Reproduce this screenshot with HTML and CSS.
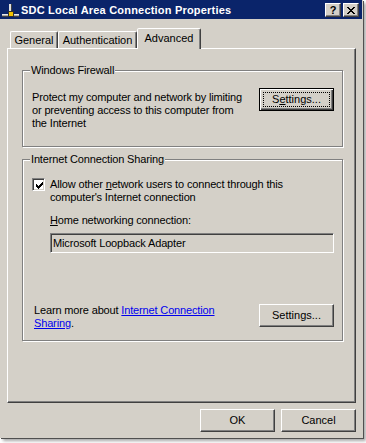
FILE: index.html
```html
<!DOCTYPE html>
<html>
<head>
<meta charset="utf-8">
<title>SDC Local Area Connection Properties</title>
<link rel="stylesheet" href="styles.css">
</head>
<body>
<div class="window">
  <div class="titlebar">
    <svg class="appicon" width="17" height="14" viewBox="0 0 17 14">
      <rect x="0" y="10" width="17" height="3" fill="#a8a8a8"/>
      <rect x="0" y="10" width="17" height="1" fill="#e8e8e8"/>
      <rect x="0" y="12" width="17" height="1" fill="#404040"/>
      <rect x="7" y="0" width="3" height="9" fill="#404040"/>
      <rect x="7" y="0" width="2" height="9" fill="#e0e0e0"/>
      <rect x="6.5" y="7.5" width="5" height="5" fill="#f2c200" stroke="#303030" stroke-width="1"/>
    </svg>
    <span class="title">SDC Local Area Connection Properties</span>
    <div class="tbtns">
      <span class="tbtn">?</span>
      <span class="tbtn">
        <svg width="8" height="7" viewBox="0 0 8 7"><path d="M0 0h2v1h-2z M6 0h2v1h-2z M1 1h2v1h-2z M5 1h2v1h-2z M2 2h4v1h-4z M3 3h2v1h-2z M2 4h4v1h-4z M1 5h2v1h-2z M5 5h2v1h-2z M0 6h2v1h-2z M6 6h2v1h-2z" fill="#000"/></svg>
      </span>
    </div>
  </div>

  <div class="tabs">
    <div class="tab tab-general">General</div>
    <div class="tab tab-auth">Authentication</div>
    <div class="tab tab-adv active">Advanced</div>
  </div>

  <div class="panel">
    <fieldset class="group g1">
      <legend>Windows Firewall</legend>
      <div class="row">
        <p class="desc">Protect my computer and network by limiting or preventing access to this computer from the Internet</p>
        <button class="btn default">S<u>e</u>ttings...</button>
      </div>
    </fieldset>

    <fieldset class="group g2">
      <legend>Internet Connection Sharing</legend>
      <div class="check">
        <span class="cb"><svg width="7" height="7" viewBox="0 0 7 7"><path d="M0 2h1v1h1v1h1v-1h1v-1h1v-1h1v-1h1v3h-1v1h-1v1h-1v1h-1v1h-1v-1h-1v-1h-1z" fill="#000"/></svg></span>
        <span class="check-text">Allow other <u>n</u>etwork users to connect through this computer's Internet connection</span>
      </div>
      <div class="field">
        <div class="flabel"><u>H</u>ome networking connection:</div>
        <div class="input">Microsoft Loopback Adapter</div>
      </div>
      <div class="row learn">
        <p class="learn-text">Learn more about <a class="link">Internet Connection Sharing</a>.</p>
        <button class="btn">Settings...</button>
      </div>
    </fieldset>
  </div>

  <div class="footer">
    <button class="btn">OK</button>
    <button class="btn">Cancel</button>
  </div>
</div>
</body>
</html>
```

FILE: styles.css
```css
* { box-sizing: border-box; }
html, body { margin: 0; padding: 0; }
body {
  width: 366px;
  height: 443px;
  overflow: hidden;
  background: #ffffff;
  font-family: "Liberation Sans", Arial, sans-serif;
  font-size: 11px;
  line-height: 13px;
  letter-spacing: -0.15px;
  color: #000;
}
.window {
  width: 363px;
  height: 438px;
  background: #d4d0c8;
  display: flex;
  flex-direction: column;
  box-shadow: 1px 1px 0 #505050, 3px 3px 3px rgba(0,0,0,.35);
}
.titlebar {
  height: 19px;
  margin-right: 1px;
  background: #0a246a;
  color: #fff;
  display: flex;
  align-items: flex-start;
  padding: 0 3px 0 2px;
}
.appicon { flex: none; margin-top: 4px; }
.title {
  flex: 1;
  margin: 4px 0 0 2px;
  font-weight: bold;
  letter-spacing: .2px;
  white-space: nowrap;
}
.tbtns { display: flex; gap: 2px; margin-top: 3px; }
.tbtn {
  width: 16px;
  height: 14px;
  background: #d4d0c8;
  color: #000;
  border: 1px solid;
  border-color: #fff #404040 #404040 #fff;
  box-shadow: inset -1px -1px 0 #808080;
  display: flex;
  align-items: center;
  justify-content: center;
  font-weight: bold;
  font-size: 11px;
  line-height: 1;
  letter-spacing: 0;
}
.tabs {
  height: 29px;
  display: flex;
  align-items: flex-end;
  padding-left: 10px;
}
.tab {
  height: 17px;
  border: 1px solid;
  border-bottom: 0;
  border-color: #fff #404040 transparent #fff;
  border-radius: 2px 2px 0 0;
  box-shadow: inset -1px 0 0 #808080;
  display: flex;
  align-items: center;
  justify-content: center;
  white-space: nowrap;
  letter-spacing: 0;
}
.tab-general { width: 48px; }
.tab-auth { width: 79px; }
.tab-adv { width: 64px; }
.tab.active {
  height: 21px;
  margin-bottom: -1px;
  position: relative;
  z-index: 1;
  background: #d4d0c8;
  padding-bottom: 2px;
}
.panel {
  margin: 0 7px;
  height: 355px;
  border: 1px solid;
  border-color: #fff #404040 #404040 #fff;
  box-shadow: inset -1px -1px 0 #808080;
  padding: 15px 12px 0 14px;
}
.group {
  margin: 0;
  min-width: 0;
  border: 1px solid #808080;
  box-shadow: 1px 1px 0 #fff, inset 1px 1px 0 #fff;
  padding: 0 8px 0 9px;
}
.group legend {
  padding: 0 1px;
  margin-left: -2px;
  background: #d4d0c8;
  line-height: 13px;
}
.g1 { padding-top: 11px; padding-bottom: 16px; }
.g2 { margin-top: 6px; padding-top: 12px; padding-bottom: 10px; }
.row {
  display: flex;
  justify-content: space-between;
  align-items: flex-start;
}
.desc { margin: 3px 0 0; width: 214px; }
p { margin: 0; }
.check { display: flex; gap: 5px; align-items: flex-start; }
.cb {
  flex: none;
  width: 13px;
  height: 13px;
  background: #fff;
  border: 1px solid;
  border-color: #808080 #fff #fff #808080;
  box-shadow: inset 1px 1px 0 #404040, inset -1px -1px 0 #d4d0c8;
  padding: 2px 0 0 2px;
  display: flex;
}
.cb svg { display: block; margin: 1px 0 0 1px; }
.field { margin: 10px 0 0 18px; }
.input {
  margin-top: 6px;
  height: 20px;
  border: 1px solid;
  border-color: #808080 #fff #fff #808080;
  box-shadow: inset 1px 1px 0 #404040, inset -1px -1px 0 #d4d0c8;
  padding: 3px 0 0 2px;
  background: #d4d0c8;
}
.learn { margin-top: 51px; }
.learn-text { width: 205px; margin-left: 2px; }
.link { color: #0000ee; text-decoration: underline; }
.btn {
  font: inherit;
  line-height: 13px;
  letter-spacing: 0;
  width: 75px;
  height: 23px;
  padding: 0;
  margin: 0;
  background: #d4d0c8;
  color: #000;
  border: 1px solid;
  border-color: #fff #404040 #404040 #fff;
  border-radius: 0;
  box-shadow: inset -1px -1px 0 #808080;
  flex: none;
}
.btn.default {
  position: relative;
  border-color: #000;
  box-shadow: inset 1px 1px 0 #fff, inset -1px -1px 0 #404040, inset -2px -2px 0 #808080;
}
.btn.default::after {
  content: "";
  position: absolute;
  inset: 3px;
  border: 1px dotted #000;
}
.footer {
  margin-top: 6px;
  display: flex;
  justify-content: flex-end;
  gap: 6px;
  padding-right: 7px;
}
```
